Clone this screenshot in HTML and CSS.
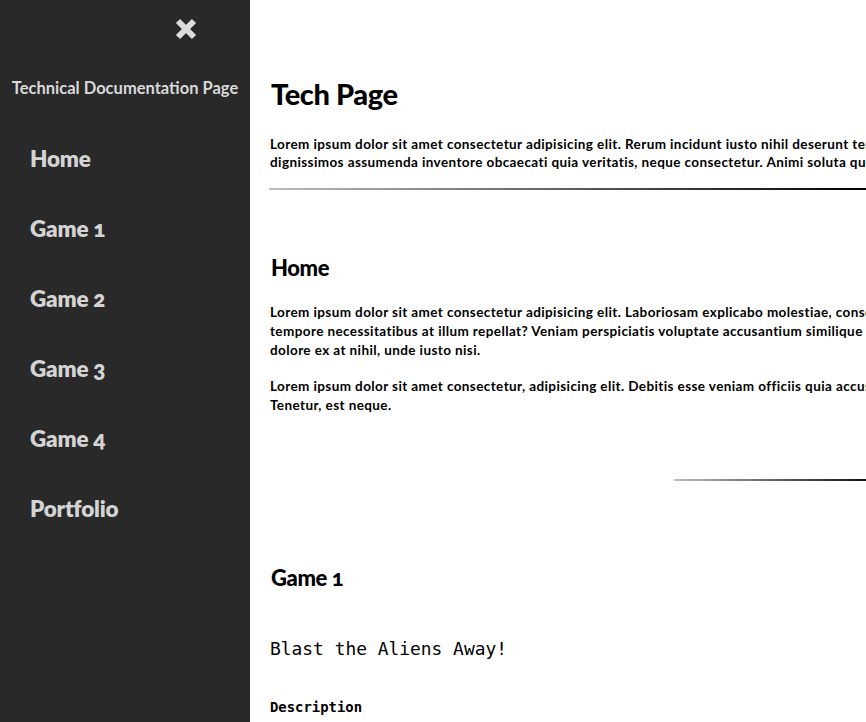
FILE: index.html
```html
<!DOCTYPE html>
<html lang="en">
<head>
<meta charset="utf-8">
<title>Technical Documentation Page</title>
<link rel="stylesheet" href="styles.css">
</head>
<body>
<div class="layout">
  <nav class="sidebar" id="navbar">
    <div class="close-row">
      <svg class="close-icon" viewBox="0 0 24 24" width="24" height="24" aria-hidden="true">
        <path d="M4 4 L20 20 M20 4 L4 20" stroke="#dcdcdc" stroke-width="6" stroke-linecap="butt" fill="none"/>
      </svg>
    </div>
    <header class="nav-title">Technical Documentation Page</header>
    <ul class="nav-list">
      <li><a class="nav-link" href="#Home">Home</a></li>
      <li><a class="nav-link" href="#Game_1">Game 1</a></li>
      <li><a class="nav-link" href="#Game_2">Game 2</a></li>
      <li><a class="nav-link" href="#Game_3">Game 3</a></li>
      <li><a class="nav-link" href="#Game_4">Game 4</a></li>
      <li><a class="nav-link" href="#Portfolio">Portfolio</a></li>
    </ul>
  </nav>
  <main class="main" id="main-doc">
    <div class="content">
      <h1 class="page-title">Tech Page</h1>
      <p class="text intro">Lorem ipsum dolor sit amet consectetur adipisicing elit. Rerum incidunt iusto nihil deserunt tempora voluptatem<br>dignissimos assumenda inventore obcaecati quia veritatis, neque consectetur. Animi soluta quis.</p>
      <hr class="rule">
      <section class="main-section" id="Home">
        <h2 class="section-title">Home</h2>
        <p class="text">Lorem ipsum dolor sit amet consectetur adipisicing elit. Laboriosam explicabo molestiae, consequatur<br>tempore necessitatibus at illum repellat? Veniam perspiciatis voluptate accusantium similique<br>dolore ex at nihil, unde iusto nisi.</p>
        <p class="text">Lorem ipsum dolor sit amet consectetur, adipisicing elit. Debitis esse veniam officiis quia accusamus<br>Tenetur, est neque.</p>
        <div class="rule-row"><hr class="rule rule-short"></div>
      </section>
      <section class="main-section" id="Game_1">
        <h2 class="section-title">Game 1</h2>
        <h3 class="game-name">Blast the Aliens Away!</h3>
        <h4 class="sub-title">Description</h4>
      </section>
    </div>
  </main>
</div>
</body>
</html>
```
FILE: styles.css
```css
html, body {
  margin: 0;
  padding: 0;
  height: 100%;
  overflow: hidden;
  background: #ffffff;
}

body {
  font-family: "Lato", "Liberation Sans", sans-serif;
  color: #000;
  font-variant-numeric: oldstyle-nums;
}

.layout {
  display: flex;
  height: 100vh;
}

.sidebar {
  width: 250px;
  flex: 0 0 250px;
  background: #292929;
  color: #d9d9d9;
  display: flex;
  flex-direction: column;
}

.close-row {
  display: flex;
  justify-content: flex-end;
  padding: 17px 52px 0 0;
}

.close-icon {
  display: block;
}

.nav-title {
  margin-top: 37px;
  text-align: center;
  font-weight: 700;
  font-size: 16.5px;
  letter-spacing: 0;
  color: #d9d9d9;
  line-height: 20px;
}

.nav-list {
  list-style: none;
  margin: 47px 0 0;
  padding: 0 0 0 30px;
  display: flex;
  flex-direction: column;
  gap: 42px;
}

.nav-link {
  display: block;
  color: #d4d4d4;
  text-decoration: none;
  font-weight: 800;
  font-size: 22.5px;
  line-height: 28px;
  letter-spacing: -0.2px;
}

.main {
  flex: 1 1 auto;
  overflow: hidden;
  min-width: 0;
}

.content {
  width: 1400px;
  padding: 76px 0 0 20px;
}

.page-title {
  margin: 0 0 0 1px;
  font-size: 29px;
  line-height: 36px;
  font-weight: 900;
  letter-spacing: -0.4px;
}

.text {
  margin: 17px 0 0 0;
  font-size: 13.5px;
  line-height: 19px;
  font-weight: 700;
  letter-spacing: 0.4px;
  white-space: nowrap;
}

.text.intro {
  margin-top: 23px;
  line-height: 18px;
}

.rule {
  margin: 17px 0 0 -1px;
  width: 597px;
  height: 2px;
  border: 0;
  background: linear-gradient(to right, #bdbdbd, #000);
}

.main-section {
  padding-top: 65px;
}

.section-title {
  margin: 0 0 0 1px;
  font-size: 22px;
  line-height: 26px;
  font-weight: 900;
  letter-spacing: -0.4px;
}

.section-title + .text {
  margin-top: 22px;
}

.rule-row {
  display: flex;
  width: 596px;
  justify-content: flex-end;
  padding-top: 64px;
}

.rule-short {
  margin: 0;
  width: 192px;
  background: linear-gradient(to right, #bdbdbd, #111);
}

#Game_1 {
  padding-top: 84px;
}

.game-name {
  margin: 46px 0 0 0;
  font-family: "DejaVu Sans Mono", monospace;
  font-weight: 400;
  font-size: 17.9px;
  line-height: 24px;
}

.sub-title {
  margin: 37px 0 0 0;
  font-family: "DejaVu Sans Mono", monospace;
  font-weight: 700;
  font-size: 13.9px;
  line-height: 18px;
}
```
